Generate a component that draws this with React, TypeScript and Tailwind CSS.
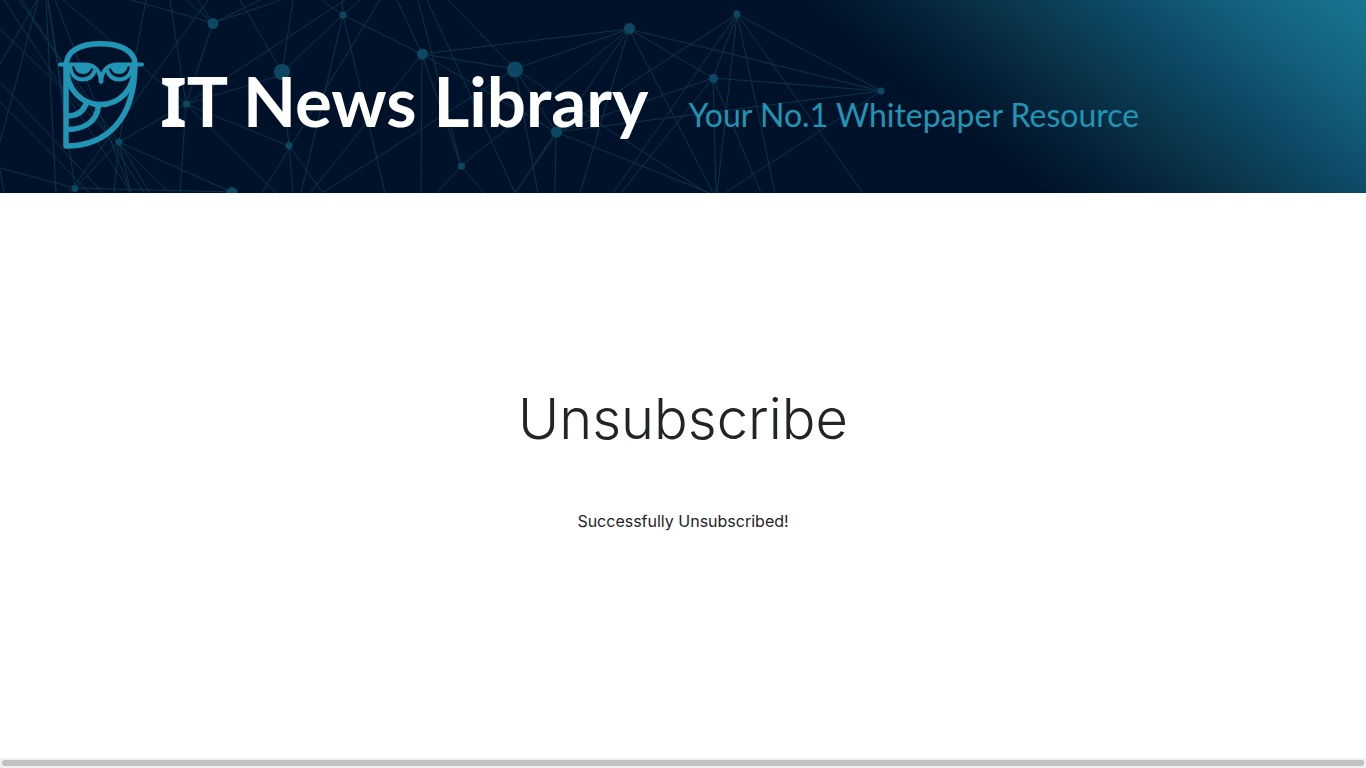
import { Fragment } from 'react';

// ─── Banner artwork ───────────────────────────────────────────────────────────

const NODES = [
	[213, 23.5, 5.5],
	[282, 72, 8],
	[186.5, 104, 3.5],
	[119, 142, 3.5],
	[289, 145.5, 3.5],
	[75, 188.5, 3.5],
	[232, 192.5, 5.5],
	[343, 15, 3.5],
	[422.5, 54, 5.5],
	[515, 69.5, 8],
	[629.5, 28.5, 5.5],
	[556.5, 132, 5.5],
	[461.5, 166, 3.5],
	[737, 14, 3.5],
	[713.5, 78.5, 4.5],
	[881, 91, 3.5],
];

// x1, y1, then every end point reached from there
const LINES = [
	[213, 23, 131, 0, 186, 0, 198, 0, 260, 0, 281, 0, 186, 104],
	[186, 104, 170, 0, 63, 0, 345, 0, 282, 75, 289, 146, 276, 193, 180, 193, 119, 142],
	[119, 142, 75, 188, 232, 192, 150, 193, 131, 193, 114, 193, 146, 0, 19, 0],
	[75, 188, 0, 168, 232, 192],
	[208, 0, 69, 193],
	[282, 72, 240, 0, 343, 15, 289, 146, 293, 0],
	[289, 146, 323, 193, 293, 193],
	[343, 15, 321, 0, 342, 0, 360, 0, 422, 54, 301, 193, 385, 193],
	[380, 0, 262, 193],
	[422, 54, 397, 0, 310, 193, 421, 193, 629, 29, 515, 69, 461, 166, 556, 132],
	[418, 0, 461, 166],
	[461, 166, 437, 193, 484, 193],
	[427, 0, 515, 193],
	[515, 69, 448, 0, 322, 193, 629, 29, 556, 132, 538, 193, 707, 193],
	[629, 29, 461, 166, 580, 193, 515, 193, 713, 78, 881, 91, 713, 193],
	[556, 132, 515, 193, 555, 193, 737, 14, 713, 78, 881, 91, 710, 193],
	[737, 14, 613, 193, 713, 78, 717, 193, 775, 193, 863, 193, 881, 91],
	[713, 78, 621, 193, 716, 193, 761, 193, 881, 91],
	[881, 91, 725, 193],
	[0, 29, 170, 193],
	[0, 82, 103, 193],
	[0, 102, 90, 193],
	[4, 0, 131, 193],
	[22, 0, 144, 193],
	[55, 0, 131, 193],
	[37, 0, 0, 64],
	[38, 0, 0, 142],
	[46, 0, 56, 193],
	[48, 0, 63, 97, 75, 188],
	[0, 170, 4, 193],
];

function Network() {
	return (
		<svg
			className="absolute inset-0 h-full w-full"
			viewBox="0 0 1366 193"
			preserveAspectRatio="xMinYMin slice"
			aria-hidden="true"
		>
			<g stroke="#0b3549" strokeWidth="1">
				{LINES.map(([x, y, ...ends], i) => (
					<Fragment key={i}>
						{ends.map((end, j) =>
							j % 2 === 0 ? <line key={j} x1={x} y1={y} x2={end} y2={ends[j + 1]} /> : null,
						)}
					</Fragment>
				))}
			</g>
			<g fill="#0d4863">
				{NODES.map(([x, y, r]) => (
					<circle key={`${x}-${y}`} cx={x} cy={y} r={r} />
				))}
			</g>
		</svg>
	);
}

function OwlLogo() {
	return (
		<svg width="86" height="108" viewBox="0 0 86 108" fill="none" stroke="#2195b6" aria-hidden="true">
			{/* Head and body */}
			<g strokeWidth="5.5" strokeLinecap="round" strokeLinejoin="round">
				<path d="M8.500 22C9.500 10 22 2.800 42.500 2.800S76 10 77 22" />
				<path d="M8 23V105C49 105 77 78 77 23" />
				<path d="M8.500 26C8.500 49 24 63.500 42.500 63.500S76.500 49 76.500 26" />
				<path d="M9 75C19 75 26 70 28.500 61M9 88.500C27 88.500 39 80 40.500 65" strokeLinecap="butt" />
			</g>
			{/* Brow and beak */}
			<path
				d="M2 23.500H27C37 23.500 41 30 43 37C45 30 49 23.500 59 23.500H84"
				strokeWidth="4"
				strokeLinecap="round"
			/>
			<path d="M43 34V40" strokeWidth="5" strokeLinecap="round" />
			{/* Eyes */}
			<path d="M12 25C13 35 19 38.500 25 38.500S35 35 37 29M49 29C51 35 55 38.500 61 38.500S73 35 74 25" strokeWidth="4" />
			<path
				d="M16 24H34C33 30 30 33 25 33S17 30 16 24ZM52 24H70C69 30 66 33 61 33S53 30 52 24Z"
				fill="#2195b6"
				stroke="none"
			/>
		</svg>
	);
}

// ─── Page ─────────────────────────────────────────────────────────────────────

function Banner() {
	return (
		<header className="relative overflow-hidden bg-[#001229] bg-[linear-gradient(38deg,#001229_65%,#041f35_70%,#0a384f_78%,#0d4562_83%,#125f7b_91%,#18718c_98%,#18758f_100%)]">
			<Network />
			<div className="relative flex h-[193px] items-start pl-[58px]">
				<div className="pt-[41px]">
					<OwlLogo />
				</div>
				<div className="flex items-baseline gap-10 pt-[53px] pl-4 font-['Lato','Noto_Sans',sans-serif] whitespace-nowrap">
					<p className="text-[69px] leading-[96px] font-bold text-white">
						{/* Slab capital I */}
						<span className="font-['Noto_Sans',sans-serif] leading-none">I</span>T News Library
					</p>
					<p className="text-[32px] leading-[48px] text-[#2195b6]">Your No.1 Whitepaper Resource</p>
				</div>
			</div>
		</header>
	);
}

export default function App() {
	return (
		<div className="flex min-h-screen flex-col bg-white font-['Inter',sans-serif] text-[#212529]">
			<Banner />
			<main className="flex flex-1 flex-col items-center pt-[193px] text-center">
				<h1 className="text-[56px] leading-[67px] font-light">Unsubscribe</h1>
				<p className="mt-14 text-base leading-6">Successfully Unsubscribed!</p>
			</main>
			{/* Horizontal scroll track */}
			<div className="h-[10px] bg-[#f1f1f1] px-[2px] py-[2px]">
				<div className="h-[6px] rounded-full bg-[#c1c1c1]" />
			</div>
		</div>
	);
}
